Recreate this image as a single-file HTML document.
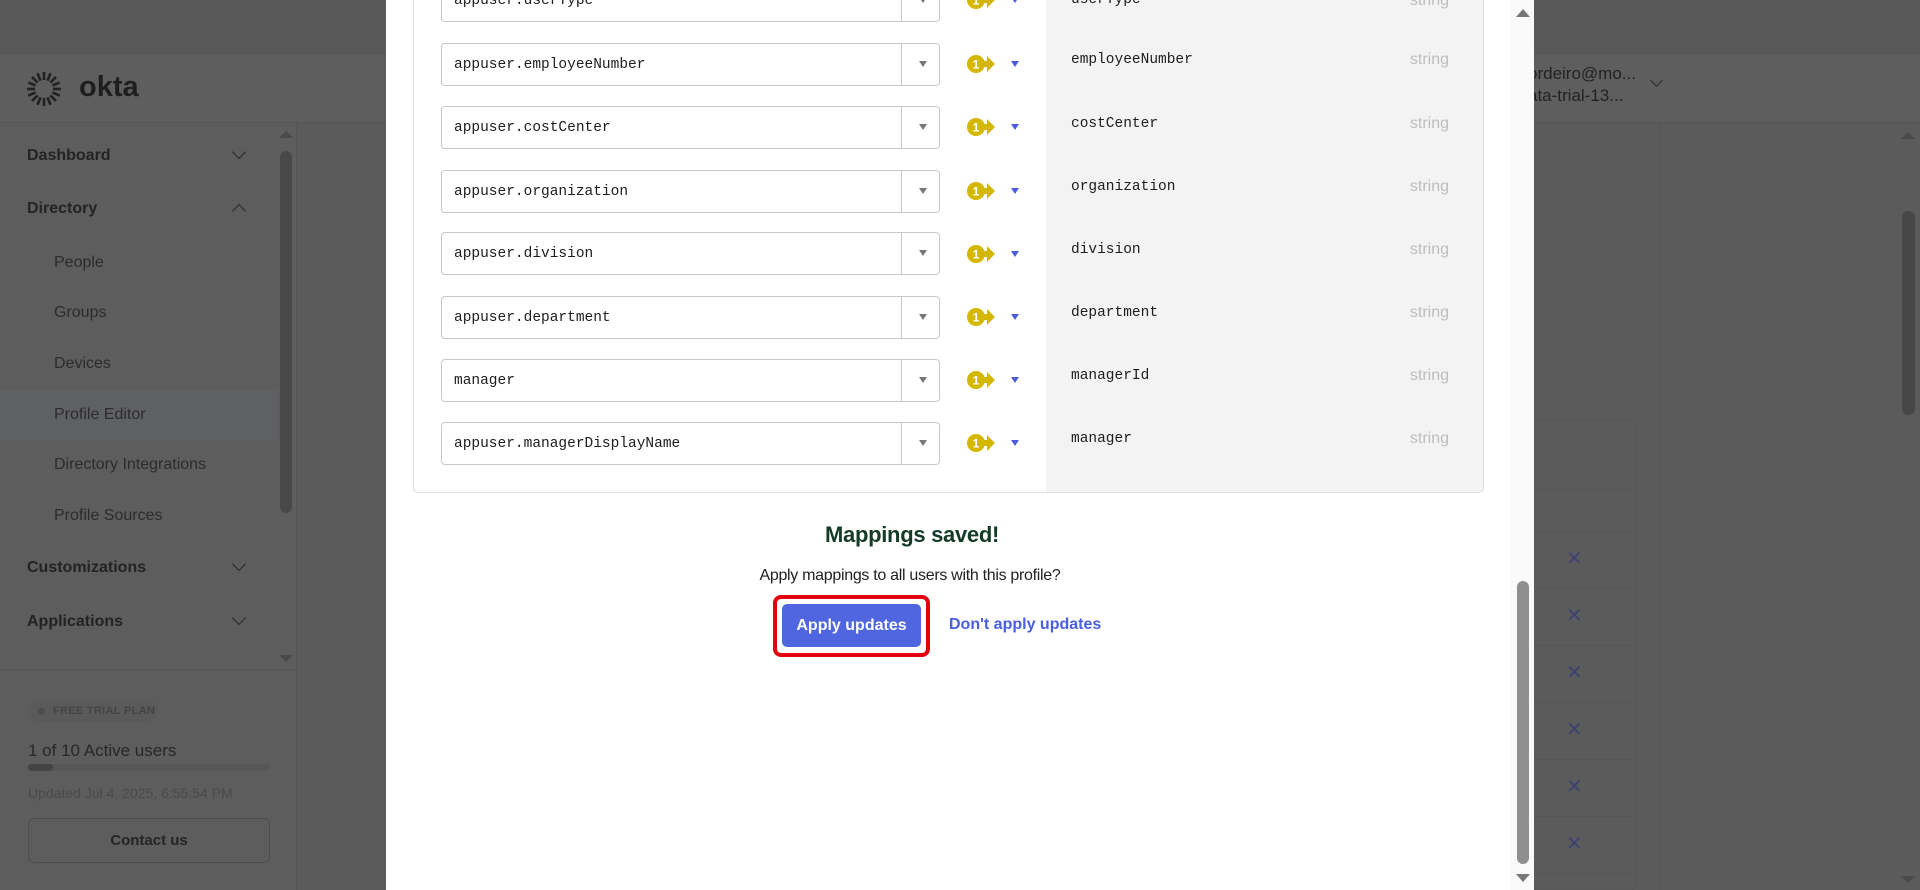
<!DOCTYPE html>
<html><head><meta charset="utf-8"><style>
*{margin:0;padding:0;box-sizing:border-box}
body{width:1920px;height:890px;overflow:hidden;background:#5b5b5b;font-family:"Liberation Sans",sans-serif;position:relative}
.a{position:absolute}
.top{left:0;top:0;width:1920px;height:55px;background:#595959}
.hdr{left:0;top:55px;width:1920px;height:68px;background:#5e5e5e;border-bottom:1px solid #555}
.side{left:0;top:123px;width:297px;height:767px;background:#5d5d5d;border-right:1px solid #555}
.nav{color:#232323;font-size:16px}
.nb{font-weight:bold;left:27px}
.ns{left:54px;color:#2c2c2c}
.chev{left:234px;width:10px;height:10px;border-right:1.5px solid #2a2a2a;border-bottom:1.5px solid #2a2a2a;transform:rotate(45deg)}
.mono{font-family:"Liberation Mono",monospace;font-size:14.5px;color:#1d1d1d}
.sel{left:441px;width:499px;height:43px;border:1px solid #c8c8c8;border-radius:4px;background:#fff}
.sel span{position:absolute;left:12px;top:13px}
.sel i{position:absolute;left:459px;top:0;width:1px;height:41px;background:#c8c8c8}
.sel b{position:absolute;left:477px;top:17px;border-left:4px solid transparent;border-right:4px solid transparent;border-top:6px solid #777}
.tri{left:1011px;border-left:4px solid transparent;border-right:4px solid transparent;border-top:6px solid #4a5de0}
.nm{left:1071px}
.st{left:1405px;font-size:16px;color:#bdbdbd;width:44px;text-align:right}
.x{left:1566px;color:#3e4270;font-size:20px}
</style></head><body>
<div class="a top"></div>
<div class="a hdr"></div>
<!-- logo -->
<svg class="a" style="left:24px;top:69px" width="40" height="40" viewBox="0 0 40 40">
<g stroke="#222" stroke-width="2.6" stroke-linecap="butt">
<line x1="20" y1="3" x2="20" y2="11"/><line x1="20" y1="29" x2="20" y2="37"/>
<line x1="3" y1="20" x2="11" y2="20"/><line x1="29" y1="20" x2="37" y2="20"/>
<line x1="8" y1="8" x2="13.6" y2="13.6"/><line x1="26.4" y1="26.4" x2="32" y2="32"/>
<line x1="32" y1="8" x2="26.4" y2="13.6"/><line x1="13.6" y1="26.4" x2="8" y2="32"/>
<line x1="13.5" y1="4.3" x2="16.5" y2="11.6"/><line x1="23.5" y1="28.4" x2="26.5" y2="35.7"/>
<line x1="26.5" y1="4.3" x2="23.5" y2="11.6"/><line x1="16.5" y1="28.4" x2="13.5" y2="35.7"/>
<line x1="4.3" y1="13.5" x2="11.6" y2="16.5"/><line x1="28.4" y1="23.5" x2="35.7" y2="26.5"/>
<line x1="4.3" y1="26.5" x2="11.6" y2="23.5"/><line x1="28.4" y1="16.5" x2="35.7" y2="13.5"/>
</g></svg>
<div class="a" style="left:79px;top:71px;font-size:29px;color:#1e1e1e;font-weight:bold;letter-spacing:0px">okta</div>
<div class="a" style="left:1528px;top:63px;font-size:17px;color:#222;line-height:22px">ordeiro@mo...<br>ata-trial-13...</div>
<div class="a chev" style="left:1652px;top:76px;width:9px;height:9px"></div>
<!-- sidebar -->
<div class="a side"></div>
<div class="a" style="left:0;top:390px;width:278px;height:50px;background:#5f6063"></div>
<div class="a nav nb" style="top:147px">Dashboard</div><div class="a chev" style="top:147px"></div>
<div class="a nav nb" style="top:200px">Directory</div><div class="a chev" style="top:206px;transform:rotate(225deg)"></div>
<div class="a nav ns" style="top:254px">People</div>
<div class="a nav ns" style="top:304px">Groups</div>
<div class="a nav ns" style="top:355px">Devices</div>
<div class="a nav ns" style="top:406px">Profile Editor</div>
<div class="a nav ns" style="top:456px">Directory Integrations</div>
<div class="a nav ns" style="top:507px">Profile Sources</div>
<div class="a nav nb" style="top:559px">Customizations</div><div class="a chev" style="top:559px"></div>
<div class="a nav nb" style="top:613px">Applications</div><div class="a chev" style="top:613px"></div>
<div class="a" style="left:280px;top:151px;width:12px;height:362px;background:#484848;border-radius:6px"></div>
<div class="a" style="left:279px;top:131px;border-left:7px solid transparent;border-right:7px solid transparent;border-bottom:7px solid #4a4a4a"></div>
<div class="a" style="left:279px;top:655px;border-left:7px solid transparent;border-right:7px solid transparent;border-top:7px solid #4a4a4a"></div>
<div class="a" style="left:0;top:669px;width:297px;height:1px;background:#555"></div>
<div class="a" style="left:28px;top:700px;width:130px;height:22px;background:#5a5a5a;border-radius:11px"></div>
<div class="a" style="left:38px;top:708px;width:7px;height:7px;border-radius:50%;background:#4c4c4c"></div>
<div class="a" style="left:53px;top:705px;font-size:11px;font-weight:bold;color:#444;letter-spacing:.3px">FREE TRIAL PLAN</div>
<div class="a" style="left:28px;top:741px;font-size:17px;color:#272727">1 of 10 Active users</div>
<div class="a" style="left:28px;top:764px;width:242px;height:7px;background:#575757;border-radius:4px"></div>
<div class="a" style="left:28px;top:764px;width:25px;height:7px;background:#444;border-radius:4px"></div>
<div class="a" style="left:28px;top:785px;font-size:14px;color:#4a4a4a">Updated Jul 4, 2025, 6:55:54 PM</div>
<div class="a" style="left:28px;top:818px;width:242px;height:45px;border:1px solid #4e4e4e;border-radius:6px;text-align:center;line-height:43px;font-size:15px;font-weight:bold;color:#252525">Contact us</div>
<!-- right content -->
<div class="a" style="left:1659px;top:123px;width:1px;height:767px;background:#555"></div>
<div class="a" style="left:1500px;top:420px;width:137px;height:470px;border:1px solid #565656;border-radius:5px"></div>
<div class="a" style="left:1534px;top:489px;width:102px;height:1px;background:#555"></div>
<div class="a" style="left:1534px;top:531px;width:102px;height:1px;background:#555"></div>
<div class="a" style="left:1534px;top:588px;width:102px;height:1px;background:#555"></div>
<div class="a" style="left:1534px;top:645px;width:102px;height:1px;background:#555"></div>
<div class="a" style="left:1534px;top:702px;width:102px;height:1px;background:#555"></div>
<div class="a" style="left:1534px;top:759px;width:102px;height:1px;background:#555"></div>
<div class="a" style="left:1534px;top:816px;width:102px;height:1px;background:#555"></div>
<div class="a" style="left:1534px;top:873px;width:102px;height:1px;background:#555"></div>
<div class="a x" style="top:546px">✕</div><div class="a x" style="top:603px">✕</div><div class="a x" style="top:660px">✕</div>
<div class="a x" style="top:717px">✕</div><div class="a x" style="top:774px">✕</div><div class="a x" style="top:831px">✕</div>
<div class="a" style="left:1902px;top:211px;width:13px;height:204px;background:#474747;border-radius:6px"></div>
<div class="a" style="left:1901px;top:132px;border-left:7px solid transparent;border-right:7px solid transparent;border-bottom:7px solid #4a4a4a"></div>
<div class="a" style="left:1901px;top:876px;border-left:7px solid transparent;border-right:7px solid transparent;border-top:7px solid #4a4a4a"></div>
<!-- modal -->
<div class="a" style="left:386px;top:0;width:1148px;height:890px;background:#fff"></div>
<div class="a" style="left:1511px;top:0;width:23px;height:890px;background:#fafafa"></div>
<div class="a" style="left:1517px;top:581px;width:12px;height:283px;background:#8f8f8f;border-radius:6px"></div>
<div class="a" style="left:1516px;top:9px;border-left:7px solid transparent;border-right:7px solid transparent;border-bottom:8px solid #777"></div>
<div class="a" style="left:1516px;top:874px;border-left:7px solid transparent;border-right:7px solid transparent;border-top:8px solid #777"></div>
<div class="a" style="left:413px;top:-10px;width:1071px;height:503px;border:1px solid #ddd;border-radius:5px;background:#fff;overflow:hidden">
<div class="a" style="left:632px;top:0;width:440px;height:503px;background:#f3f3f3"></div></div>
<!-- rows -->
<div class="a sel" style="top:-21px"><span class="mono">appuser.userType</span><i></i><b></b></div>
<div class="a sel" style="top:43px"><span class="mono">appuser.employeeNumber</span><i></i><b></b></div>
<div class="a sel" style="top:106px"><span class="mono">appuser.costCenter</span><i></i><b></b></div>
<div class="a sel" style="top:170px"><span class="mono">appuser.organization</span><i></i><b></b></div>
<div class="a sel" style="top:232px"><span class="mono">appuser.division</span><i></i><b></b></div>
<div class="a sel" style="top:296px"><span class="mono">appuser.department</span><i></i><b></b></div>
<div class="a sel" style="top:359px"><span class="mono">manager</span><i></i><b></b></div>
<div class="a sel" style="top:422px"><span class="mono">appuser.managerDisplayName</span><i></i><b></b></div>
<svg width="0" height="0" style="position:absolute"><defs><g id="k"><circle cx="9" cy="10" r="9" fill="#d4b800"/><rect x="15" y="7" width="7" height="6" fill="#d4b800"/><path d="M20 2 L28 10 L20 18Z" fill="#d4b800"/><text x="9" y="14.5" font-size="12" font-weight="bold" fill="#fff" text-anchor="middle" font-family="Liberation Sans">1</text></g></defs></svg>
<svg class="a" style="left:967px;top:-10px" width="30" height="20"><use href="#k"/></svg>
<svg class="a" style="left:967px;top:54px" width="30" height="20"><use href="#k"/></svg>
<svg class="a" style="left:967px;top:117px" width="30" height="20"><use href="#k"/></svg>
<svg class="a" style="left:967px;top:181px" width="30" height="20"><use href="#k"/></svg>
<svg class="a" style="left:967px;top:244px" width="30" height="20"><use href="#k"/></svg>
<svg class="a" style="left:967px;top:307px" width="30" height="20"><use href="#k"/></svg>
<svg class="a" style="left:967px;top:370px" width="30" height="20"><use href="#k"/></svg>
<svg class="a" style="left:967px;top:433px" width="30" height="20"><use href="#k"/></svg>
<div class="a tri" style="top:-3px"></div><div class="a tri" style="top:61px"></div><div class="a tri" style="top:124px"></div><div class="a tri" style="top:188px"></div>
<div class="a tri" style="top:251px"></div><div class="a tri" style="top:314px"></div><div class="a tri" style="top:377px"></div><div class="a tri" style="top:440px"></div>
<div class="a mono nm" style="top:-8px">userType</div><div class="a st" style="top:-8px">string</div>
<div class="a mono nm" style="top:52px">employeeNumber</div><div class="a st" style="top:51px">string</div>
<div class="a mono nm" style="top:116px">costCenter</div><div class="a st" style="top:115px">string</div>
<div class="a mono nm" style="top:179px">organization</div><div class="a st" style="top:178px">string</div>
<div class="a mono nm" style="top:242px">division</div><div class="a st" style="top:241px">string</div>
<div class="a mono nm" style="top:305px">department</div><div class="a st" style="top:304px">string</div>
<div class="a mono nm" style="top:368px">managerId</div><div class="a st" style="top:367px">string</div>
<div class="a mono nm" style="top:431px">manager</div><div class="a st" style="top:430px">string</div>
<!-- bottom -->
<div class="a" style="left:756px;top:522px;width:312px;text-align:center;font-size:22px;color:#143a28;font-weight:bold;letter-spacing:-0.3px">Mappings saved!</div>
<div class="a" style="left:680px;top:567px;width:460px;text-align:center;font-size:16px;color:#222;letter-spacing:-0.3px">Apply mappings to all users with this profile?</div>
<div class="a" style="left:773px;top:595px;width:157px;height:62px;border:4px solid #e3000f;border-radius:8px"></div>
<div class="a" style="left:782px;top:604px;width:139px;height:43px;background:#5066e0;border-radius:5px;color:#fff;font-weight:bold;font-size:16px;text-align:center;line-height:43px">Apply updates</div>
<div class="a" style="left:949px;top:616px;font-size:16px;font-weight:bold;color:#4a5fe0">Don't apply updates</div>
</body></html>
